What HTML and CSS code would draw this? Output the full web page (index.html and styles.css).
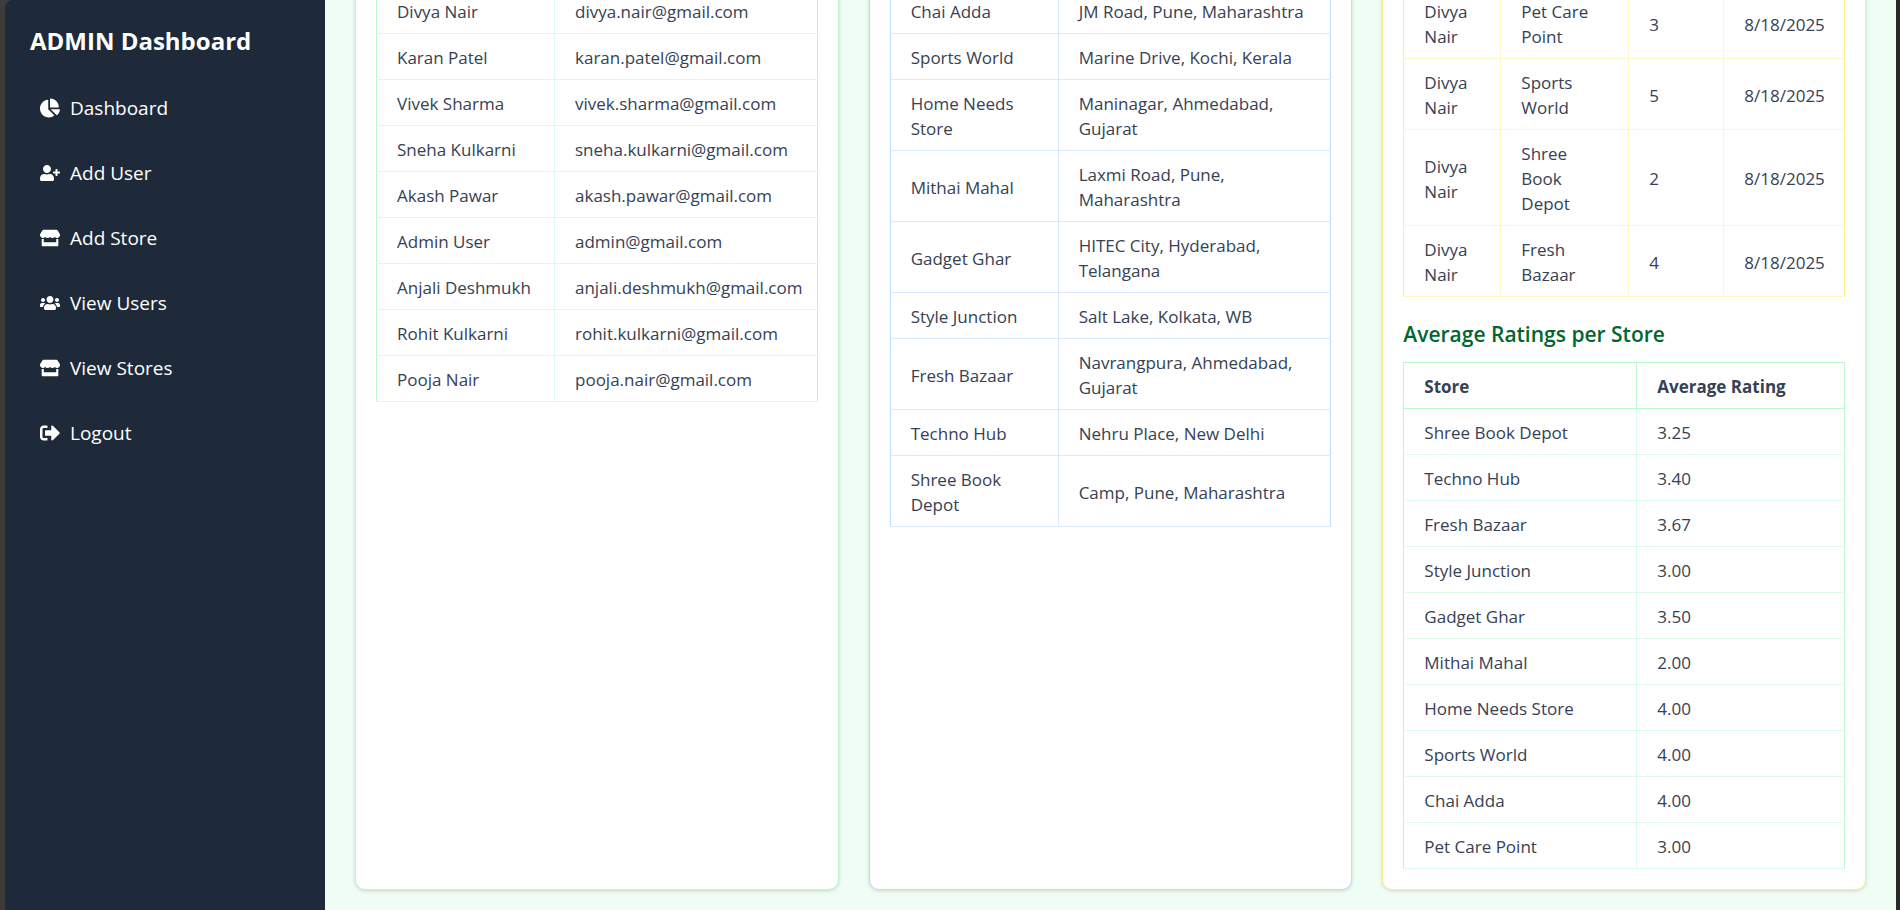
FILE: index.html
```html
<!DOCTYPE html>
<html lang="en">
<head>
<meta charset="utf-8">
<title>ADMIN Dashboard</title>
<link rel="stylesheet" href="styles.css">
</head>
<body>
<svg class="sprite" aria-hidden="true">
  <symbol id="i-pie" viewBox="0 0 544 512"><path d="M527.79 288H290.5l158.03 158.03c6.04 6.04 15.98 6.53 22.19.68 38.7-36.46 65.32-85.61 73.13-140.86 1.34-9.46-6.51-17.85-16.06-17.85zm-15.83-64.8C503.72 103.74 408.26 8.28 288.8.04 279.68-.59 272 7.1 272 16.24V240h223.77c9.14 0 16.82-7.68 16.19-16.8zM224 288V50.71c0-9.55-8.39-17.4-17.84-16.06C86.99 51.49-4.1 155.6.14 280.37 4.5 408.51 114.83 513.59 243.03 511.98c50.4-.63 96.97-16.87 135.26-44.03 7.9-5.6 8.42-17.23 1.57-24.08L224 288z"/></symbol>
  <symbol id="i-user-plus" viewBox="0 0 640 512"><path d="M624 208h-64v-64c0-8.8-7.2-16-16-16h-32c-8.8 0-16 7.2-16 16v64h-64c-8.8 0-16 7.2-16 16v32c0 8.8 7.2 16 16 16h64v64c0 8.8 7.2 16 16 16h32c8.8 0 16-7.2 16-16v-64h64c8.8 0 16-7.2 16-16v-32c0-8.8-7.2-16-16-16zm-400 48c70.7 0 128-57.3 128-128S294.7 0 224 0 96 57.3 96 128s57.3 128 128 128zm89.6 32h-16.7c-22.2 10.2-46.9 16-72.9 16s-50.6-5.8-72.9-16h-16.7C60.2 288 0 348.2 0 422.4V464c0 26.5 21.5 48 48 48h352c26.5 0 48-21.5 48-48v-41.6c0-74.2-60.2-134.4-134.4-134.4z"/></symbol>
  <symbol id="i-store" viewBox="0 0 616 512"><path d="M602 118.6L537.1 15C531.3 5.7 521 0 510 0H106C95 0 84.7 5.7 78.9 15L14 118.6c-33.5 53.5-3.8 127.9 58.8 136.4 4.5.6 9.1.9 13.7.9 29.6 0 55.8-13 73.8-33.1 18 20.1 44.3 33.1 73.8 33.1 29.6 0 55.8-13 73.8-33.1 18 20.1 44.3 33.1 73.8 33.1 29.6 0 55.8-13 73.8-33.1 18.1 20.1 44.3 33.1 73.8 33.1 4.7 0 9.2-.3 13.7-.9 62.8-8.4 92.6-82.8 59-136.4zM529.5 288c-10 0-19.9-1.5-29.5-3.8V384H116v-99.8c-9.6 2.2-19.5 3.8-29.5 3.8-6 0-12.1-.4-18-1.2-5.6-.8-11.1-2.1-16.4-3.6V480c0 17.7 14.3 32 32 32h448c17.7 0 32-14.3 32-32V283.2c-5.4 1.6-10.8 2.9-16.4 3.6-6.1.8-12.1 1.2-18.2 1.2z"/></symbol>
  <symbol id="i-users" viewBox="0 0 640 512"><path d="M96 224c35.3 0 64-28.7 64-64s-28.7-64-64-64-64 28.7-64 64 28.7 64 64 64zm448 0c35.3 0 64-28.7 64-64s-28.7-64-64-64-64 28.7-64 64 28.7 64 64 64zm32 32h-64c-17.6 0-33.5 7.1-45.1 18.6 40.3 22.1 68.9 62 75.1 109.4h66c17.7 0 32-14.3 32-32v-32c0-35.3-28.7-64-64-64zm-256 0c61.9 0 112-50.1 112-112S381.9 32 320 32 208 82.1 208 144s50.1 112 112 112zm76.8 32h-8.3c-20.8 10-43.9 16-68.5 16s-47.6-6-68.5-16h-8.3C179.6 288 128 339.6 128 403.2V432c0 26.5 21.5 48 48 48h288c26.5 0 48-21.5 48-48v-28.8c0-63.6-51.6-115.2-115.2-115.2zm-223.7-13.4C161.5 263.1 145.6 256 128 256H64c-35.3 0-64 28.7-64 64v32c0 17.7 14.3 32 32 32h65.9c6.3-47.4 34.9-87.3 75.2-109.4z"/></symbol>
  <symbol id="i-logout" viewBox="0 0 512 512"><path d="M497 273L329 441c-15 15-41 4.5-41-17v-96H152c-13.3 0-24-10.7-24-24v-96c0-13.3 10.7-24 24-24h136V88c0-21.4 25.9-32 41-17l168 168c9.3 9.4 9.3 24.6 0 34zM192 436v-40c0-6.6-5.4-12-12-12H96c-17.7 0-32-14.3-32-32V160c0-17.7 14.3-32 32-32h84c6.6 0 12-5.4 12-12V76c0-6.6-5.4-12-12-12H96c-53 0-96 43-96 96v192c0 53 43 96 96 96h84c6.6 0 12-5.4 12-12z"/></symbol>
</svg>
<div class="app">
  <aside class="sidebar">
    <h1 class="brand">ADMIN Dashboard</h1>
    <nav class="menu">
      <a class="menu-link" href="#dashboard"><svg class="icon"><use href="#i-pie"/></svg>Dashboard</a>
      <a class="menu-link" href="#add-user"><svg class="icon"><use href="#i-user-plus"/></svg>Add User</a>
      <a class="menu-link" href="#add-store"><svg class="icon"><use href="#i-store"/></svg>Add Store</a>
      <a class="menu-link" href="#users"><svg class="icon"><use href="#i-users"/></svg>View Users</a>
      <a class="menu-link" href="#stores"><svg class="icon"><use href="#i-store"/></svg>View Stores</a>
      <a class="menu-link" href="#logout"><svg class="icon"><use href="#i-logout"/></svg>Logout</a>
    </nav>
  </aside>
  <main class="content">
    <div class="cards">
      <section class="card green">
        <table class="grid green users">
          <colgroup><col class="c-name"><col></colgroup>
          <tbody>
            <tr><td>Divya Nair</td><td>divya.nair@gmail.com</td></tr>
            <tr><td>Karan Patel</td><td>karan.patel@gmail.com</td></tr>
            <tr><td>Vivek Sharma</td><td>vivek.sharma@gmail.com</td></tr>
            <tr><td>Sneha Kulkarni</td><td>sneha.kulkarni@gmail.com</td></tr>
            <tr><td>Akash Pawar</td><td>akash.pawar@gmail.com</td></tr>
            <tr><td>Admin User</td><td>admin@gmail.com</td></tr>
            <tr><td>Anjali Deshmukh</td><td>anjali.deshmukh@gmail.com</td></tr>
            <tr><td>Rohit Kulkarni</td><td>rohit.kulkarni@gmail.com</td></tr>
            <tr><td>Pooja Nair</td><td>pooja.nair@gmail.com</td></tr>
          </tbody>
        </table>
      </section>
      <section class="card blue">
        <table class="grid blue stores">
          <colgroup><col class="c-name"><col></colgroup>
          <tbody>
            <tr><td>Chai Adda</td><td>JM Road, Pune, Maharashtra</td></tr>
            <tr><td>Sports World</td><td>Marine Drive, Kochi, Kerala</td></tr>
            <tr><td>Home Needs Store</td><td>Maninagar, Ahmedabad, Gujarat</td></tr>
            <tr><td>Mithai Mahal</td><td>Laxmi Road, Pune,<br>Maharashtra</td></tr>
            <tr><td>Gadget Ghar</td><td>HITEC City, Hyderabad, Telangana</td></tr>
            <tr><td>Style Junction</td><td>Salt Lake, Kolkata, WB</td></tr>
            <tr><td>Fresh Bazaar</td><td>Navrangpura, Ahmedabad, Gujarat</td></tr>
            <tr><td>Techno Hub</td><td>Nehru Place, New Delhi</td></tr>
            <tr><td>Shree Book<br>Depot</td><td>Camp, Pune, Maharashtra</td></tr>
          </tbody>
        </table>
      </section>
      <section class="card yellow">
        <table class="grid yellow ratings">
          <colgroup><col class="c-user"><col class="c-store"><col class="c-score"><col></colgroup>
          <tbody>
            <tr><td>Divya Nair</td><td>Pet Care<br>Point</td><td>3</td><td>8/18/2025</td></tr>
            <tr><td>Divya Nair</td><td>Sports<br>World</td><td>5</td><td>8/18/2025</td></tr>
            <tr><td>Divya Nair</td><td>Shree<br>Book<br>Depot</td><td>2</td><td>8/18/2025</td></tr>
            <tr><td>Divya Nair</td><td>Fresh<br>Bazaar</td><td>4</td><td>8/18/2025</td></tr>
          </tbody>
        </table>
        <h2 class="subtitle">Average Ratings per Store</h2>
        <table class="grid green averages">
          <colgroup><col class="c-name"><col></colgroup>
          <thead>
            <tr><th>Store</th><th>Average Rating</th></tr>
          </thead>
          <tbody>
            <tr><td>Shree Book Depot</td><td>3.25</td></tr>
            <tr><td>Techno Hub</td><td>3.40</td></tr>
            <tr><td>Fresh Bazaar</td><td>3.67</td></tr>
            <tr><td>Style Junction</td><td>3.00</td></tr>
            <tr><td>Gadget Ghar</td><td>3.50</td></tr>
            <tr><td>Mithai Mahal</td><td>2.00</td></tr>
            <tr><td>Home Needs Store</td><td>4.00</td></tr>
            <tr><td>Sports World</td><td>4.00</td></tr>
            <tr><td>Chai Adda</td><td>4.00</td></tr>
            <tr><td>Pet Care Point</td><td>3.00</td></tr>
          </tbody>
        </table>
      </section>
    </div>
  </main>
</div>
</body>
</html>
```
FILE: styles.css
```css
* { box-sizing: border-box; }

body {
  margin: 0;
  background: #2b2b2b;
  color: #364153;
  font: 17px/25px "Open Sans", "Noto Sans", sans-serif;
  overflow: hidden;
}

.sprite { display: none; }

.app {
  display: flex;
  height: 100vh;
  border-left: 5px solid #3c3c3c;
  border-right: 4px solid #292929;
  background: #3c3c3c;
}

/* Sidebar */
.sidebar {
  flex: none;
  width: 320px;
  padding: 20px 25px;
  background: #1e2939;
  border-top-left-radius: 8px;
  color: #fff;
}

.brand {
  margin: 0 0 22px;
  font-size: 24px;
  line-height: 41px;
  font-weight: 700;
}

.menu {
  display: flex;
  flex-direction: column;
  gap: 15px;
}

.menu-link {
  display: flex;
  align-items: center;
  gap: 10px;
  padding: 10px;
  color: #fff;
  font-size: 19px;
  line-height: 30px;
  text-decoration: none;
}

.icon {
  width: 20px;
  height: 20px;
  fill: currentColor;
}

/* Content, shown scrolled to its end */
.content {
  flex: 1;
  min-width: 0;
  padding: 0 30px;
  background: #f0fdf4;
  overflow: hidden;
}

.cards {
  display: grid;
  grid-template-columns: repeat(3, minmax(0, 1fr));
  gap: 30px;
  margin-top: -34px;
}

.card {
  padding: 20px;
  border: 1px solid var(--edge);
  border-radius: 10px;
  background: #fff;
  box-shadow: 0 1px 4px rgba(0, 0, 0, 0.1), 0 1px 3px rgba(0, 0, 0, 0.06);
}

.green { --edge: #b9f8cf; --line: #dcfce7; }
.blue { --edge: #bedbff; --line: #dbeafe; }
.yellow { --edge: #fff085; --line: #fef9c2; }

.grid {
  width: 100%;
  table-layout: fixed;
  border-collapse: collapse;
}

.grid td,
.grid th {
  padding: 11px 0 9px 20px;
  border: 1px solid var(--line);
  text-align: left;
}

.grid th {
  border-color: var(--edge);
  font-weight: 700;
}

.grid td:first-child { border-left-color: var(--edge); }
.grid td:last-child { border-right-color: var(--edge); }

.users .c-name { width: 178px; }
.stores .c-name { width: 168px; }
.averages .c-name { width: 233px; }
.ratings .c-user { width: 97px; }
.ratings .c-store { width: 128px; }
.ratings .c-score { width: 95px; }

.subtitle {
  margin: 20px 0 10px;
  color: #016630;
  font-size: 21px;
  line-height: 35px;
  font-weight: 600;
}
```
